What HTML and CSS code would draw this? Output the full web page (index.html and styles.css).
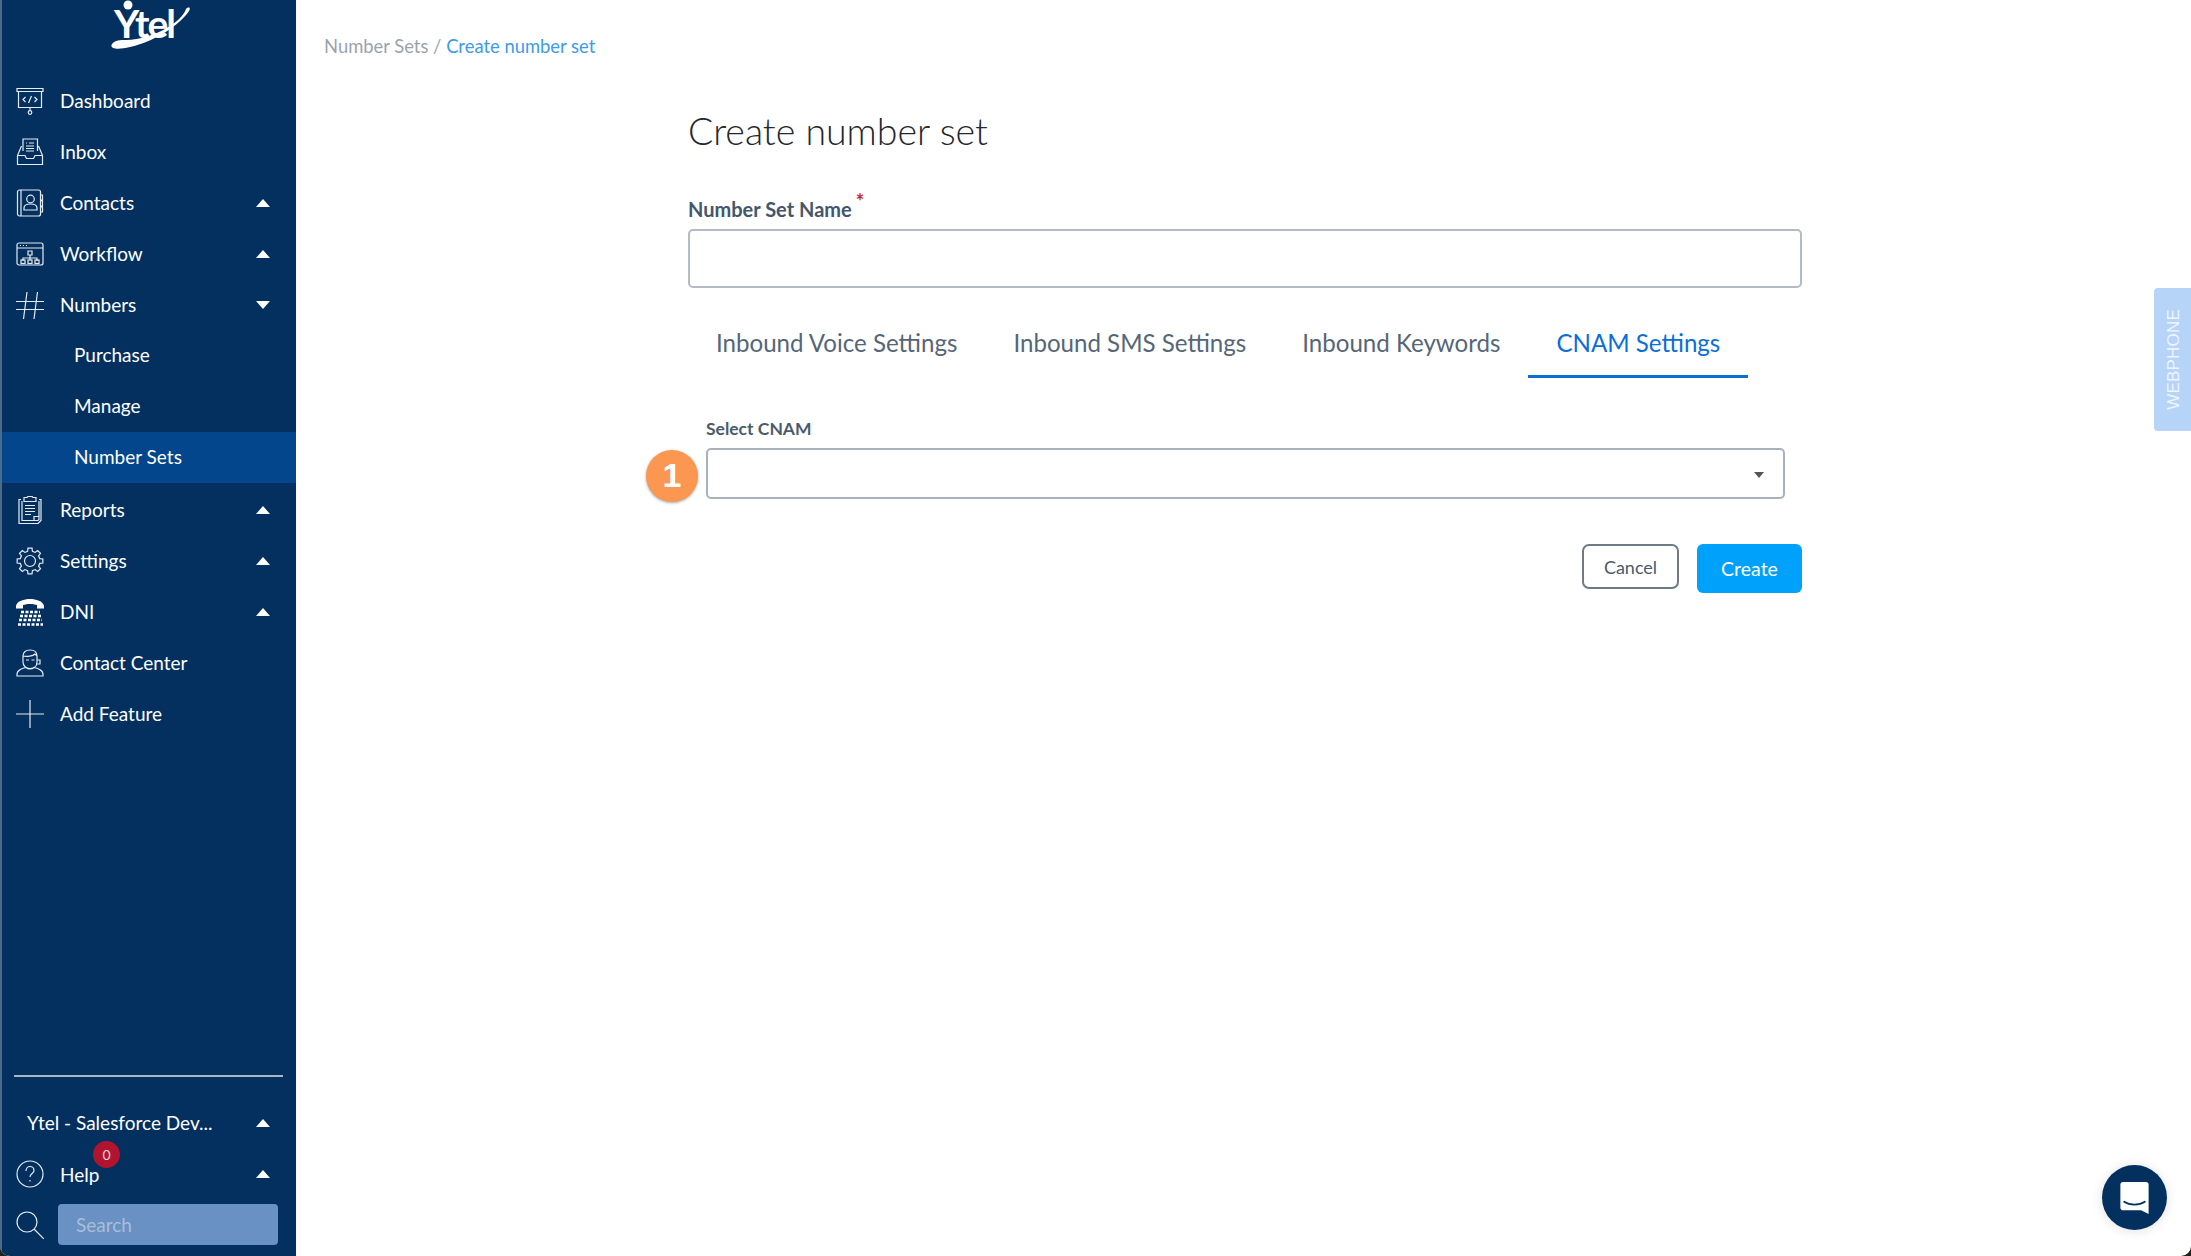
FILE: index.html
```html
<!DOCTYPE html>
<html lang="en">
<head>
<meta charset="utf-8">
<title>Create number set</title>
<link rel="stylesheet" href="styles.css">
</head>
<body>
<div class="app">
  <aside class="sidebar">
    <div class="logo">
      <span class="logo-word">Ytel</span>
      <svg class="logo-swoosh" viewBox="0 0 84 50"><circle cx="18" cy="5" r="4.500" fill="#fff"/><path d="M2 44c-3 5 6 6 18 3 24-5 50-22 59-36 2-3 0-5-3-2-4 13-32 30-60 31-6 0-11 0-14 4z" fill="#fff"/></svg>
    </div>
    <nav class="nav">
      <a class="nav-item"><svg class="ico" viewBox="0 0 28 28"><path d="M1 1.500h26v3H1zM2.500 4.500v16h23v-16M14 20.500v3"/><circle cx="14" cy="25.500" r="1.800"/><path d="M9.500 10l-2.500 2.500 2.500 2.500M18.500 10l2.500 2.500-2.500 2.500M15.500 9l-3 7"/></svg><span>Dashboard</span></a>
      <a class="nav-item"><svg class="ico" viewBox="0 0 28 28"><path d="M7 13V1h14.500v12M5.500 8l-4 9.500v9h25v-9L22.500 8M1.500 17.500h7.500l1.500 3h7l1.500-3h7.500M10 5h1M13 5h5M10 8h8M10 10.500h8M10 13h8"/></svg><span>Inbox</span></a>
      <a class="nav-item"><svg class="ico" viewBox="0 0 28 28"><rect x="1.500" y="1" width="23" height="26" rx="2"/><path d="M5 1v26M24.500 6h2v5h-2M24.500 12h2v5h-2M24.500 18h2v5h-2"/><circle cx="14.500" cy="10" r="3.800"/><path d="M8 21v-2c0-3 3-4 6.500-4s6.500 1 6.500 4v2z"/></svg><span>Contacts</span><i class="caret"></i></a>
      <a class="nav-item"><svg class="ico" viewBox="0 0 28 24"><rect x="1" y="1" width="26" height="22" rx="2"/><path d="M1 6h26M4 3.500h1M7 3.500h1M10 3.500h1M12 9h4v4h-4zM14 13v3M7 19v-3h14v3M14 16v2"/><rect x="5" y="18" width="4" height="3.500"/><rect x="12" y="18" width="4" height="3.500"/><rect x="19" y="18" width="4" height="3.500"/></svg><span>Workflow</span><i class="caret"></i></a>
      <a class="nav-item"><svg class="ico" viewBox="0 0 28 28"><path d="M0 10.500h28M0 18.500h28M11 1L7.500 28M21.500 1L18 28"/></svg><span>Numbers</span><i class="caret down"></i></a>
      <a class="nav-sub">Purchase</a>
      <a class="nav-sub">Manage</a>
      <a class="nav-sub active">Number Sets</a>
      <a class="nav-item after-sub"><svg class="ico" viewBox="0 0 28 28"><path d="M5 3.500H3v24h19l3-3v-21h-2M8 1.500v4h12v-4h-3l-1-1h-4l-1 1zM6 5v19.500h16l1-1V5M9 9.500h10M9 12.500h10M9 15.500h10M9 18.500h6M18 24.500v-4h5"/></svg><span>Reports</span><i class="caret"></i></a>
      <a class="nav-item"><svg class="ico" viewBox="0 0 28 28"><path transform="translate(14 14)" d="M9.700-2.420L12.840-2.030V2.030L9.700 2.420 8.570 5.150 10.510 7.640 7.640 10.510 5.150 8.570 2.420 9.700 2.030 12.840H-2.030L-2.420 9.700-5.150 8.570-7.640 10.510-10.510 7.640-8.570 5.150-9.700 2.420-12.840 2.030V-2.030L-9.700-2.420-8.570-5.150-10.510-7.640-7.640-10.510-5.150-8.570-2.420-9.700-2.030-12.840H2.030L2.420-9.700 5.150-8.570 7.640-10.510 10.510-7.640 8.570-5.150z"/><circle cx="14" cy="14" r="5.500"/></svg><span>Settings</span><i class="caret"></i></a>
      <a class="nav-item"><svg class="ico" viewBox="0 0 28 28"><path class="solid" d="M0 8C1 3 8 1 14 1s13 2 14 7v2.500h-7V7c-4-1.500-10-1.500-14 0v3.500H0z"/><path class="dots" d="M5 14h19M4 18h21M3 22h23M2 26.500h25"/></svg><span>DNI</span><i class="caret"></i></a>
      <a class="nav-item"><svg class="ico" viewBox="0 0 28 28"><path d="M7 11V7c0-4 3-6 7-6s7 2 7 6v6c0 4-3 6.500-7 6.500S7 17 7 13zM7 7c4 1 10 0 12-2l2 2M10 11h3M15.500 11h3M20 15h4v-4h-3M1 27v-2c0-4 6-6 9-6.500 2 2 6 2 8 0 3 .5 9 2.500 9 6.500v2z"/></svg><span>Contact Center</span></a>
      <a class="nav-item"><svg class="ico" viewBox="0 0 28 28"><path d="M0 14h28M14 0v28"/></svg><span>Add Feature</span></a>
    </nav>
    <div class="side-foot">
      <hr class="side-rule">
      <a class="org"><span>Ytel - Salesforce Dev...</span><i class="caret"></i></a>
      <a class="nav-item help"><svg class="ico" viewBox="0 0 28 28"><circle cx="14" cy="14" r="13"/><path d="M10 11c0-3 2-4.500 4-4.500s4 1.500 4 4c0 3-4 3-4 6.500M14 20v1.500"/></svg><span>Help</span><b class="badge">0</b><i class="caret"></i></a>
      <div class="search-row">
        <svg class="ico" viewBox="0 0 28 28"><circle cx="11" cy="11" r="10"/><path d="M18 18l10 10"/></svg>
        <div class="search-box">Search</div>
      </div>
    </div>
  </aside>
  <main class="main">
    <div class="crumbs"><span class="crumb-root">Number Sets / </span><a class="crumb-now">Create number set</a></div>
    <section class="form">
      <h1 class="title">Create number set</h1>
      <label class="name-label">Number Set Name<sup class="req">*</sup></label>
      <div class="name-input"></div>
      <div class="tabs">
        <a class="tab">Inbound Voice Settings</a>
        <a class="tab">Inbound SMS Settings</a>
        <a class="tab">Inbound Keywords</a>
        <a class="tab on">CNAM Settings</a>
      </div>
      <div class="cnam">
        <label class="cnam-label">Select CNAM</label>
        <div class="select"><i class="select-arrow"></i><span class="step">1</span></div>
      </div>
      <div class="actions">
        <button class="btn-cancel">Cancel</button>
        <button class="btn-create">Create</button>
      </div>
    </section>
  </main>
  <div class="webphone"><span>WEBPHONE</span></div>
  <div class="chat">
    <svg viewBox="0 0 30 34"><path d="M3 0h24a3 3 0 0 1 3 3v31l-8-4H3a3 3 0 0 1-3-3V3a3 3 0 0 1 3-3z" fill="#fff"/><path d="M4 21c6 4 16 4 22 0" fill="none" stroke="#03305f" stroke-width="1.800" stroke-linecap="round"/></svg>
  </div>
</div>
</body>
</html>
```
FILE: styles.css
```css
* { box-sizing: border-box; }
html, body { margin: 0; height: 100%; }
body { background: #20241c; font-family: Lato, "Open Sans", sans-serif; overflow: hidden; }
a { display: block; }

.app {
  position: relative;
  display: flex;
  width: 2191px;
  height: 1256px;
  background: #fff;
  border-radius: 0 0 10px 10px;
  overflow: hidden;
}

/* Sidebar */
.sidebar {
  display: flex;
  flex-direction: column;
  flex: 0 0 296px;
  height: 100%;
  background: #03305f;
  border-left: 2px solid #4b6a8c;
  color: #fff;
}
.logo { position: relative; height: 75px; flex: none; }
.logo-word {
  position: absolute;
  left: 112px;
  top: 0;
  font-size: 39px;
  font-weight: 700;
  letter-spacing: -2px;
  line-height: normal;
  color: #fff;
}
.logo-swoosh { position: absolute; left: 108px; top: 0; width: 84px; height: 50px; }
.nav { display: flex; flex-direction: column; }
.nav-item {
  position: relative;
  display: flex;
  align-items: center;
  height: 51px;
  padding-left: 14px;
  font-size: 19px;
  line-height: 51px;
  flex: none;
}
.nav-item > span { margin-left: 16px; }
.after-sub { margin-top: 1px; }
.ico {
  flex: none;
  width: 28px;
  height: 28px;
  fill: none;
  stroke: #e6ebf1;
  stroke-width: 1.200;
}
.ico .solid { fill: #fff; stroke: none; }
.ico .dots { stroke: #fff; stroke-width: 2.600; stroke-dasharray: 3 1.500; }
.caret {
  position: absolute;
  right: 26px;
  top: 22px;
  width: 0;
  height: 0;
  border-left: 7.500px solid transparent;
  border-right: 7.500px solid transparent;
  border-bottom: 8px solid #fff;
}
.caret.down { border-bottom: 0; border-top: 8px solid #fff; }
.nav-sub {
  height: 51px;
  padding-left: 72px;
  font-size: 19px;
  line-height: 49px;
  color: #fff;
  flex: none;
}
.nav-sub.active { background: #03468c; line-height: 50px; }
.side-foot { margin-top: auto; display: flex; flex-direction: column; padding-bottom: 11px; }
.side-rule { width: 269px; height: 2px; margin: 0 0 20px 12px; border: 0; background: #a8b6c6; }
.org {
  position: relative;
  height: 51px;
  padding-left: 25px;
  font-size: 19px;
  line-height: 51px;
}
.org .caret { top: 22px; }
.help { height: 52px; }
.badge {
  position: absolute;
  left: 91px;
  top: -7px;
  width: 27px;
  height: 27px;
  border-radius: 50%;
  background: #b1142f;
  color: #f4d9dd;
  font-size: 14px;
  font-weight: 400;
  line-height: 27px;
  text-align: center;
}
.search-row { display: flex; align-items: center; gap: 14px; padding-left: 14px; margin-top: 4px; }
.search-box {
  width: 220px;
  height: 41px;
  padding-left: 18px;
  border-radius: 4px;
  background: #6a91c3;
  color: #a9bed8;
  font-size: 19px;
  line-height: 41px;
}

/* Main */
.main { flex: 1; min-width: 0; display: flex; flex-direction: column; }
.crumbs { padding: 34px 0 0 28px; font-size: 18.400px; line-height: 24px; }
.crumb-root { color: #9aa3ad; }
.crumb-now { display: inline; color: #3d9be9; }
.form { width: 1114px; margin-left: 392px; display: flex; flex-direction: column; }
.title {
  margin: 48px 0 0;
  font-size: 37.500px;
  font-weight: 300;
  line-height: 50px;
  color: #24282c;
}
.name-label {
  margin-top: 40px;
  font-size: 20px;
  font-weight: 700;
  line-height: 26px;
  color: #44566c;
}
.req { color: #c8282d; font-size: 20px; line-height: 0; margin-left: 4px; }
.name-input {
  height: 59px;
  margin-top: 7px;
  border: 2px solid #b3bbc4;
  border-radius: 5px;
}
.tabs { display: flex; margin-top: 20px; padding-left: 0; }
.tab {
  padding: 19px 28px 0;
  height: 70px;
  font-size: 24.100px;
  line-height: 32px;
  color: #556677;
  white-space: nowrap;
}
.tab.on { color: #0a6ed6; border-bottom: 3px solid #0a6ed6; }
.cnam { padding: 0 17px 0 18px; margin-top: 39px; }
.cnam-label {
  display: block;
  font-size: 17.500px;
  font-weight: 700;
  line-height: 24px;
  color: #4a5b6d;
}
.select {
  position: relative;
  height: 51px;
  margin-top: 7px;
  border: 2px solid #a9b1ba;
  border-radius: 5px;
}
.select-arrow {
  position: absolute;
  right: 19px;
  top: 22px;
  width: 0;
  height: 0;
  border-left: 5px solid transparent;
  border-right: 5px solid transparent;
  border-top: 6px solid #555;
}
.step {
  position: absolute;
  left: -62px;
  top: 0;
  width: 52px;
  height: 52px;
  border-radius: 50%;
  background: #fb9750;
  box-shadow: 0 1px 3px rgba(0, 0, 0, .35);
  color: #fff;
  font-family: "Liberation Sans", Arial, sans-serif;
  font-size: 34px;
  font-weight: 700;
  line-height: 50px;
  text-align: center;
}
.actions { display: flex; justify-content: flex-end; align-items: flex-start; gap: 18px; margin-top: 45px; }
.btn-cancel, .btn-create { font-family: Lato, sans-serif; cursor: pointer; }
.btn-cancel {
  width: 97px;
  height: 45px;
  padding: 0;
  border: 2px solid #6d7a88;
  border-radius: 7px;
  background: #fff;
  color: #4a5a6a;
  font-size: 18px;
}
.btn-create {
  width: 105px;
  height: 49px;
  padding: 0;
  border: 0;
  border-radius: 6px;
  background: #00a1fa;
  color: #fff;
  font-size: 19.500px;
}

/* Overlays */
.webphone {
  position: absolute;
  right: 0;
  top: 288px;
  width: 37px;
  height: 143px;
  display: flex;
  align-items: center;
  justify-content: center;
  padding-left: 3px;
  border-radius: 4px 0 0 4px;
  background: #b5d4f7;
}
.webphone span {
  writing-mode: vertical-rl;
  transform: rotate(180deg);
  font-family: "Liberation Sans", Arial, sans-serif;
  font-size: 17px;
  color: #eef5fd;
  letter-spacing: .2px;
}
.chat {
  position: absolute;
  left: 2102px;
  top: 1165px;
  width: 65px;
  height: 65px;
  display: flex;
  align-items: center;
  justify-content: center;
  border-radius: 50%;
  background: #03305f;
  box-shadow: 0 1px 12px rgba(0, 0, 0, .12);
}
.chat svg { width: 29px; height: 32px; }
```
